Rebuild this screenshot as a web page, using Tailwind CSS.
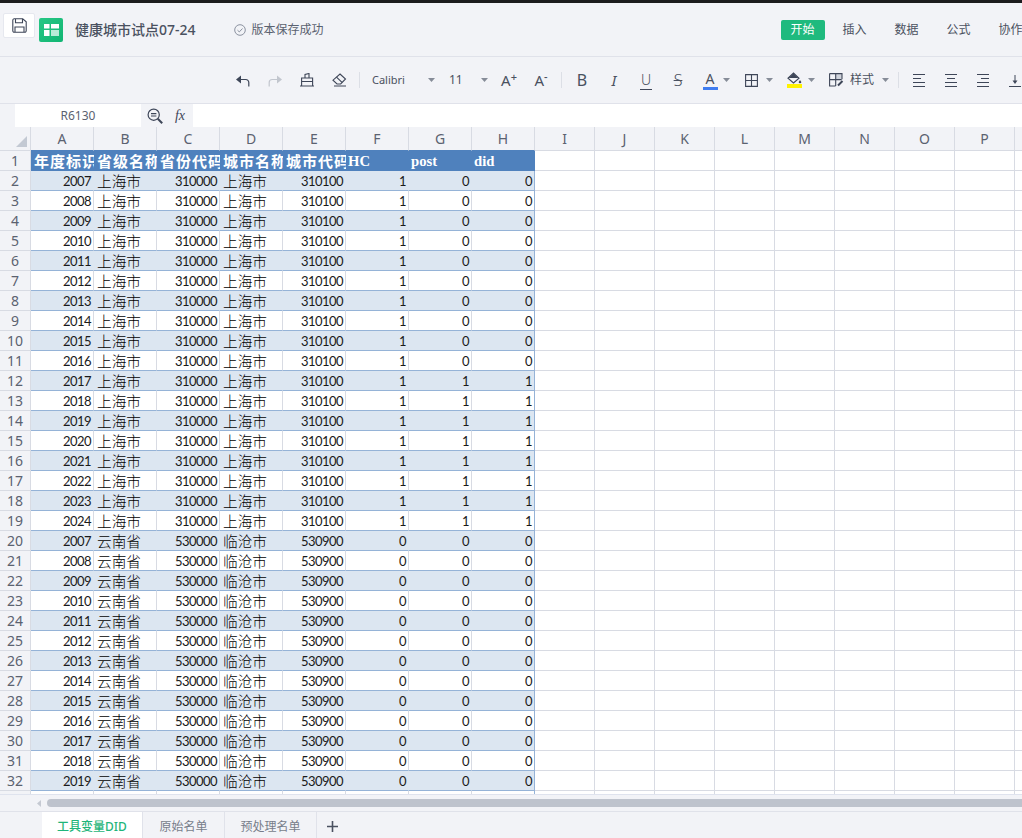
<!doctype html>
<html>

<head>
  <meta charset="UTF-8" />
  <title>健康城市试点07-24</title>
  <script src="https://cdn.jsdelivr.net/npm/@tailwindcss/browser@4"></script>
</head>

<body>
  <main class="flex flex-col w-[1022px] h-[838px] overflow-hidden bg-[#f2f3f7] text-[#4a5160] font-['Noto_Sans','Noto_Sans_CJK_SC',sans-serif]">
    <div class="h-[3px] bg-[#1c1c1e] shrink-0"></div>

    <!-- title bar -->
    <header class="flex items-center w-max min-w-[1022px] h-[54px] shrink-0 border-b border-[#e0e2ea] pl-[3px]">
      <button class="flex items-center justify-center w-[32px] h-[25px] -mt-[8px] bg-white border border-[#e6e8ef] rounded-[2px]">
        <svg width="15" height="15" viewBox="0 0 15 15" fill="none" stroke="#3e4658" stroke-width="1.1"><path d="M2.5.8h8.2l3.5 3v9a1.4 1.4 0 0 1-1.4 1.4H2.2A1.4 1.4 0 0 1 .8 12.8V2.2A1.4 1.4 0 0 1 2.5.8z" /><path d="M3.5 1v3.8h7V1M3 14V9h9v5" /></svg>
      </button>
      <div class="flex items-center justify-center w-[24px] h-[24px] ml-[4px] rounded-[2px] bg-gradient-to-br from-[#27c785] to-[#10b573]">
        <svg width="15" height="12" viewBox="0 0 15 12"><path fill="#fff" d="M0 0h5.5v4.5H0zM7 0h8v4.5H7zM0 6h5.5v6H0z" /><path fill="#fff" opacity=".7" d="M7 6h8v6H7z" /></svg>
      </div>
      <span class="ml-[12px] text-[14px] font-medium text-[#4a5160] whitespace-nowrap">健康城市试点07-24</span>
      <svg class="ml-[38px]" width="12" height="12" viewBox="0 0 12 12" fill="none" stroke="#8b92a0"><circle cx="6" cy="6" r="5.3" /><path d="M3.5 6.2l1.8 1.7 3.2-3.4" /></svg>
      <span class="ml-[6px] text-[12px] text-[#5b6270] whitespace-nowrap">版本保存成功</span>
      <span class="flex items-center justify-center w-[44px] h-[20px] ml-[457px] rounded-[2px] bg-[#1fba7e] text-white text-[12px]">开始</span>
      <span class="ml-[18px] text-[12px] text-[#4a5160] whitespace-nowrap">插入</span>
      <span class="ml-[28px] text-[12px] text-[#4a5160] whitespace-nowrap">数据</span>
      <span class="ml-[28px] text-[12px] text-[#4a5160] whitespace-nowrap">公式</span>
      <span class="ml-[28px] text-[12px] text-[#4a5160] whitespace-nowrap">协作</span>
    </header>

    <!-- toolbar -->
    <div class="flex items-center w-max h-[46px] shrink-0 pl-[227px] whitespace-nowrap">
      <span class="flex items-center justify-center w-[32px]"><svg width="14" height="13" viewBox="0 0 14 13" fill="none" stroke="#3e4658" stroke-width="1.2"><path d="M12.8 12.5V8.5A3 3 0 0 0 9.8 5.5H2" /><path fill="#3e4658" stroke="none" d="M0 5.5L5 1.5v8z" /></svg></span>
      <span class="flex items-center justify-center w-[32px]"><svg width="14" height="13" viewBox="0 0 14 13" fill="none" stroke="#c2c6ce" stroke-width="1.2"><path d="M1.2 12.5V8.5A3 3 0 0 1 4.2 5.5H12" /><path fill="#c2c6ce" stroke="none" d="M14 5.5L9 1.5v8z" /></svg></span>
      <span class="flex items-center justify-center w-[32px]"><svg width="14" height="14" viewBox="0 0 14 14" fill="none" stroke="#3e4658" stroke-width="1.1"><path d="M1.6 12.6V5h11v7.6M0 13h14M5 5V1.5l4-1V5M1.6 8.5h11" /></svg></span>
      <span class="flex items-center justify-center w-[32px]"><svg width="15" height="14" viewBox="0 0 15 14" fill="none" stroke="#3e4658" stroke-width="1.1"><path d="M8 1l5.5 5-4.8 5H5L1 7.2z" /><path d="M4.5 4.2l5.5 5.2M2 13h12" /></svg></span>
      <span class="w-px h-[16px] ml-[4px] bg-[#dcdfe6]"></span>
      <span class="w-[56px] ml-[12px] text-[11px] text-[#4a5160]">Calibri</span>
      <svg width="7" height="4" viewBox="0 0 7 4"><path fill="#868c98" d="M0 0h7L3.5 4z" /></svg>
      <span class="w-[32px] ml-[14px] text-[12px] text-[#4a5160]">11</span>
      <svg width="7" height="4" viewBox="0 0 7 4"><path fill="#868c98" d="M0 0h7L3.5 4z" /></svg>
      <span class="flex items-start justify-center w-[32px] ml-[5px] text-[15px] leading-[18px] text-[#4a5160]">A<span class="text-[11px] leading-[11px] font-medium">+</span></span>
      <span class="flex items-start justify-center w-[32px] text-[15px] leading-[18px] text-[#4a5160]">A<span class="text-[11px] leading-[11px] font-medium">-</span></span>
      <span class="w-px h-[16px] ml-[4px] bg-[#dcdfe6]"></span>
      <span class="w-[32px] ml-[4px] text-center text-[16px] leading-[18px] text-[#4a5160]">B</span>
      <span class="w-[32px] text-center text-[15px] leading-[18px] italic text-[#4a5160]">I</span>
      <span class="w-[32px] text-center text-[14px] font-light leading-[16px] text-[#4a5160]"><span class="border-b border-[#3e4658] px-[1px]">U</span></span>
      <span class="w-[32px] text-center text-[16px] font-light leading-[18px] line-through text-[#4a5160]">S</span>
      <span class="flex flex-col items-center w-[32px]"><span class="text-[14px] leading-[15px] text-[#4a5160]">A</span><span class="w-[15px] h-[3px] mt-[1px] bg-[#3f7cf0]"></span></span>
      <svg class="-ml-[3px]" width="7" height="4" viewBox="0 0 7 4"><path fill="#868c98" d="M0 0h7L3.5 4z" /></svg>
      <span class="flex items-center justify-center w-[32px] ml-[5px]"><svg width="13" height="13" viewBox="0 0 13 13" fill="none" stroke="#3e4658" stroke-width="1.1"><path d="M.6.6h11.8v11.8H.6zM6.5.6v11.8M.6 6.5h11.8" /></svg></span>
      <svg class="-ml-[1px]" width="7" height="4" viewBox="0 0 7 4"><path fill="#868c98" d="M0 0h7L3.5 4z" /></svg>
      <span class="flex flex-col items-center w-[32px] ml-[5px]">
        <svg width="15" height="12" viewBox="0 0 15 12"><path fill="none" stroke="#3e4658" stroke-width="1.1" d="M1 6.2L6.5 1 12 6.2 6.5 11z" /><path fill="#3e4658" d="M1.5 6h10L6.5 1.2z" /><path fill="#3e4658" d="M13 8l1.3 2a1.3 1.3 0 0 1-2.6 0z" /></svg>
        <span class="w-[15px] h-[4px] bg-[#fff200]"></span>
      </span>
      <svg class="-ml-[2px]" width="7" height="4" viewBox="0 0 7 4"><path fill="#868c98" d="M0 0h7L3.5 4z" /></svg>
      <svg class="ml-[14px]" width="16" height="14" viewBox="0 0 16 14" fill="none" stroke="#3e4658" stroke-width="1.1"><path fill="#cfd3db" stroke="none" d="M7 1h6v5H7z" /><path d="M.6.6h12.4v5.6M.6.6v12.4h6M6.7.6v12.4M.6 6.6h12" /><path stroke-width="2" d="M9 12.5l4.5-4.5" /></svg>
      <span class="ml-[5px] w-[24px] text-[12px] text-[#4a5160]">样式</span>
      <svg class="ml-[8px]" width="7" height="4" viewBox="0 0 7 4"><path fill="#868c98" d="M0 0h7L3.5 4z" /></svg>
      <span class="w-px h-[16px] ml-[9px] bg-[#dcdfe6]"></span>
      <span class="flex items-center justify-center w-[32px] ml-[4px]"><svg width="12" height="13" viewBox="0 0 12 13" stroke="#3e4658"><path d="M0 .5h12M0 4.5h8M0 8.5h12M0 12.5h12" /></svg></span>
      <span class="flex items-center justify-center w-[32px]"><svg width="12" height="13" viewBox="0 0 12 13" stroke="#3e4658"><path d="M0 .5h12M2 4.5h8M0 8.5h12M0 12.5h12" /></svg></span>
      <span class="flex items-center justify-center w-[32px]"><svg width="12" height="13" viewBox="0 0 12 13" stroke="#3e4658"><path d="M0 .5h12M4 4.5h8M0 8.5h12M0 12.5h12" /></svg></span>
      <span class="flex items-center justify-center w-[32px]"><svg width="12" height="13" viewBox="0 0 12 13" stroke="#3e4658" fill="#3e4658"><path d="M0 12.5h12M6 1v7" /><path stroke="none" d="M3.5 6.5h5L6 10z" /></svg></span>
    </div>

    <!-- formula bar -->
    <div class="flex items-stretch h-[24px] shrink-0 pl-[15px] border-t border-[#e0e2ea]">
      <div class="flex items-center justify-center w-[126px] bg-white text-[12px] text-[#5b6270]">R6130</div>
      <span class="flex items-center justify-center w-[28px]"><svg width="16" height="16" viewBox="0 0 16 16" fill="none" stroke="#3e4658" stroke-width="1.2"><circle cx="6.7" cy="6.7" r="5.6" /><path d="M4 5.6h5.4M4 8h5.4" /><path stroke-width="2" d="M10.8 10.8l4.4 4.4" /></svg></span>
      <span class="w-[24px] -ml-[1px] mr-[1px] text-center font-['Liberation_Serif',serif] italic font-medium text-[14px] leading-[23px] text-[#3e4658]">fx</span>
      <div class="flex-1 bg-white"></div>
    </div>

    <!-- sheet -->
    <div id="sheet" class="grid grid-cols-[31px_repeat(8,63px)_repeat(9,60px)] grid-rows-[24px_repeat(33,20px)] h-[668px] shrink-0 overflow-hidden bg-white border-b border-[#dfe3ee]"></div>

    <!-- scrollbar -->
    <div class="flex items-center h-[16px] shrink-0">
      <svg class="ml-[37px]" width="4" height="7" viewBox="0 0 4 7"><path fill="#c5c9d2" d="M4 0v7L0 3.5z" /></svg>
      <div class="flex-1 h-[8px] ml-[6px] rounded-l-[4px] bg-[#bec3cd]"></div>
    </div>

    <!-- sheet tabs -->
    <nav class="flex items-stretch h-[27px] shrink-0 pl-[42px] border-t border-[#e0e2ea] text-[12px]">
      <span class="flex items-center justify-center w-[101px] pt-[3px] bg-white border-r border-[#e0e2ea] font-medium text-[#1fb57a]">工具变量DID</span>
      <span class="flex items-center justify-center w-[82px] pt-[3px] border-r border-[#e0e2ea] text-[#777d8a]">原始名单</span>
      <span class="flex items-center justify-center w-[92px] pt-[3px] border-r border-[#e0e2ea] text-[#777d8a]">预处理名单</span>
      <svg class="self-center ml-[10px] mt-[2px]" width="11" height="11" viewBox="0 0 11 11" stroke="#4a5160" stroke-width="1.6"><path d="M5.5 0v11M0 5.5h11" /></svg>
    </nav>
  </main>
  <script>
    const letters = "ABCDEFGHIJKLMNOPQ".split("");
    const heads = ["年度标识", "省级名称", "省份代码", "城市名称", "城市代码"];
    const latinHeads = ["HC", "post", "did"];

    function rowData(r) {
      if (r <= 19) {
        const y = 2005 + r;
        const p = y >= 2017 ? 1 : 0;
        return [y, "上海市", 310000, "上海市", 310100, 1, p, p];
      }
      return [1987 + r, "云南省", 530000, "临沧市", 530900, 0, 0, 0];
    }

    let html = '<div class="flex items-end justify-end pr-[3px] pb-[3px] bg-[#f2f3f7] border-r border-b border-[#d8dbe3]"><svg width="11" height="11" viewBox="0 0 11 11"><path fill="#c3c9d3" d="M11 0v11H0z"/></svg></div>';
    letters.forEach((l, i) => {
      const edge = i < 8 ? "border-b-[#4f81bd]" : "border-b-[#d8dbe3]";
      html += `<div class="flex items-center justify-center bg-[#f2f3f7] border-r border-b border-r-[#d8dbe3] ${edge} text-[14px] text-[#5b6270]">${l}</div>`;
    });

    for (let r = 1; r <= 33; r++) {
      html += `<div class="flex items-center justify-center bg-[#f2f3f7] border-r border-b border-[#d8dbe3] text-[14px] text-[#5b6270]">${r}</div>`;
      const band = r % 2 === 0;
      for (let c = 0; c < 17; c++) {
        if (c >= 8) {
          html += '<div class="border-r border-b border-[#d8dbe3]"></div>';
        } else if (r === 1) {
          if (c < 5) {
            html += `<div class="overflow-hidden whitespace-nowrap pl-[3px] bg-[#4f81bd] font-['Noto_Sans_CJK_SC',sans-serif] font-bold text-[15px] leading-[20px] tracking-[1px] text-white">${heads[c]}</div>`;
          } else {
            html += `<div class="overflow-hidden whitespace-nowrap pl-[2px] bg-[#4f81bd] font-['Liberation_Serif',serif] font-bold text-[14.67px] leading-[20px] text-white">${latinHeads[c - 5]}</div>`;
          }
        } else {
          const v = rowData(r)[c];
          const bg = band ? "bg-[#dce6f1] border-r-[#dce6f1]" : "bg-white border-r-[#d8dbe3]";
          const right = c === 7 ? "!border-r-[#95b3d7]" : "";
          if (typeof v === "string") {
            html += `<div class="overflow-hidden whitespace-nowrap pl-[3px] border-r border-b border-b-[#95b3d7] ${bg} ${right} font-['Noto_Sans_CJK_SC',sans-serif] font-light text-[14.67px] leading-[20px] text-black">${v}</div>`;
          } else {
            html += `<div class="overflow-hidden whitespace-nowrap pr-[2px] text-right border-r border-b border-b-[#95b3d7] ${bg} ${right} font-['Lato',sans-serif] text-[13px] tracking-[-0.55px] leading-[20px] text-[#1a1a1a]">${v}</div>`;
          }
        }
      }
    }
    document.getElementById("sheet").innerHTML = html;
  </script>
</body>

</html>
